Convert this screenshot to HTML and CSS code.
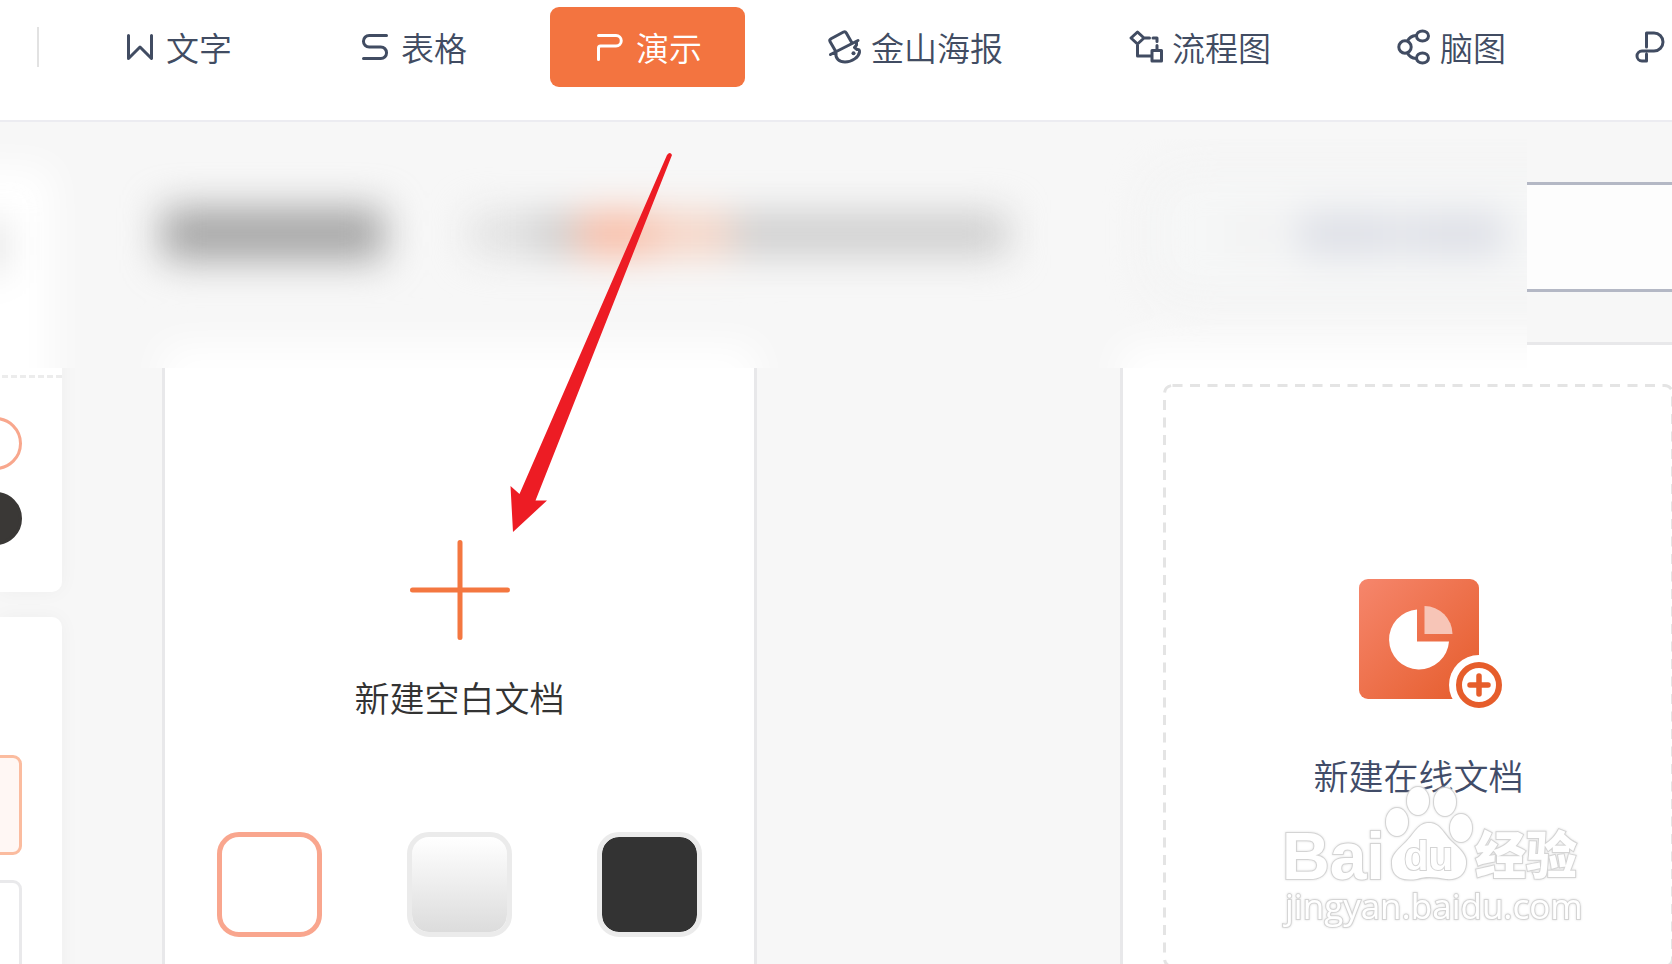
FILE: index.html
```html
<!DOCTYPE html>
<html lang="zh-CN">
<head>
    <meta charset="UTF-8">
    <meta name="viewport" content="width=device-width, initial-scale=1.0">
    <title>新建演示</title>
    <link rel="stylesheet" href="styles.css">
</head>
<body>
    <header class="header">
        <div class="divider"></div>
        <nav class="nav">
            <a class="nav-item" href="#">
                <svg class="icon" viewBox="0 0 34 34"><path d="M5.5 5.5V28.5L17 17L28.5 28.5V5.5"/></svg>
                <span>文字</span>
            </a>
            <a class="nav-item" href="#">
                <svg class="icon" viewBox="0 0 34 34"><path d="M28.5 5.5H11.2A5.7 5.7 0 0 0 11.2 17H22.8A5.7 5.7 0 0 1 22.8 28.5H5.5"/></svg>
                <span>表格</span>
            </a>
            <a class="nav-item active" href="#">
                <svg class="icon" viewBox="0 0 34 34"><path d="M5.5 29.5V18q0-2 2-2H23a5.2 5.2 0 0 0 0-10.5H5.5"/></svg>
                <span>演示</span>
            </a>
            <a class="nav-item" href="#">
                <svg class="icon" viewBox="0 0 34 34">
                    <path d="M7.5 21L2 11.500q-.8-1.800 1-2.800L15.500 2q1.800-.8 2.800 1L24 13M2.500 24.500L30 10.500M8 22.500C7 29 11.500 32 17 32C24 32 31 27 31.500 22Q31.800 19 29 19.500L26.500 17.500L28.500 15V12"/>
                    <circle class="dot" cx="25.500" cy="23.300" r="2"/>
                </svg>
                <span>金山海报</span>
            </a>
            <a class="nav-item" href="#">
                <svg class="icon" viewBox="0 0 34 34">
                    <path d="M8.500 2L15 8L8.500 14L2 8ZM8.500 14V26H22M15 8H20.500M24 8H28V11.500M28 15.500V20M23 20.500H32.500V31H23Z"/>
                </svg>
                <span>流程图</span>
            </a>
            <a class="nav-item" href="#">
                <svg class="icon" viewBox="0 0 34 34">
                    <circle cx="8" cy="17" r="6.200"/>
                    <ellipse cx="25.500" cy="6" rx="6" ry="5"/>
                    <ellipse cx="25.500" cy="28" rx="6" ry="5"/>
                    <path d="M10.500 11Q13 6 19 5.500M10.500 23Q13 28 19 28.500"/>
                </svg>
                <span>脑图</span>
            </a>
            <a class="nav-item" href="#" aria-label="PDF">
                <svg class="icon" viewBox="0 0 34 34">
                    <path d="M14.500 17V3H22A9 9 0 0 1 22 21H10A5 5 0 0 0 10 31H14.500V24"/>
                </svg>
            </a>
        </nav>
    </header>

    <main class="workspace">
        <aside class="sidebar">
            <div class="side-card side-card-top">
                <div class="side-line"></div>
                <button class="round-choice" aria-label="白色"></button>
                <button class="round-choice round-dark" aria-label="黑色"></button>
            </div>
            <div class="side-card side-card-bottom">
                <button class="box-choice selected" aria-label="选项一"></button>
                <button class="box-choice" aria-label="选项二"></button>
            </div>
        </aside>

        <section class="content">
            <div class="toolbar">
                <input class="search" type="text" aria-label="搜索">
            </div>

            <div class="panels">
                <div class="panel blank-panel">
                    <svg class="plus" viewBox="0 0 100 100"><path d="M50 2.500V97.500M2.500 50H97.500"/></svg>
                    <div class="panel-label">新建空白文档</div>
                    <div class="swatches">
                        <input class="swatch white" type="radio" name="color" aria-label="白色" checked>
                        <input class="swatch gray" type="radio" name="color" aria-label="灰色">
                        <input class="swatch dark" type="radio" name="color" aria-label="黑色">
                    </div>
                </div>

                <div class="panel online-panel">
                    <div class="dashed-box">
                        <svg class="dashes"><rect x="1.500" y="1.500" rx="8"/></svg>
                        <svg class="ppt" viewBox="0 0 120 120">
                            <defs>
                                <linearGradient id="pptFill" x1="0" y1="0" x2="1" y2="1">
                                    <stop offset="0" stop-color="#f6866c"/>
                                    <stop offset="1" stop-color="#e55c2b"/>
                                </linearGradient>
                            </defs>
                            <rect width="120" height="120" rx="9" fill="url(#pptFill)"/>
                            <path d="M58 30.500A30 30 0 1 0 90 62.500H58Z" fill="#fff"/>
                            <path d="M65.500 27A28.500 28.500 0 0 1 93.500 55H65.500Z" fill="#f7c5b7"/>
                            <circle cx="120" cy="106" r="30" fill="#fff"/>
                            <circle cx="120" cy="106" r="20" fill="none" stroke="#e65d2b" stroke-width="6"/>
                            <path d="M120 97V115M111 106H129" stroke="#e65d2b" stroke-width="5.500" stroke-linecap="round"/>
                        </svg>
                        <div class="panel-label online-label">新建在线文档</div>
                    </div>
                </div>
            </div>
        </section>

        <!-- blurred strip over the toolbar -->
        <div class="veil">
            <div class="smear">
                <div class="smear-side"><i class="side-mark"></i></div>
                <div class="smear-content">
                    <div class="smear-row">
                        <i class="title-bar"></i>
                        <i class="s1"></i><i class="s2"></i><i class="s3"></i><i class="s4"></i><i class="s5"></i>
                        <div class="smear-search">
                            <i class="search-mark"></i>
                            <i class="search-words"></i>
                        </div>
                    </div>
                    <div class="smear-panels">
                        <i class="smear-panel"></i>
                        <i class="smear-panel"></i>
                    </div>
                </div>
            </div>
        </div>
    </main>

    <svg class="arrow" viewBox="0 0 162 380">
        <path d="M157 3Q160-1 162 3L25.500 348.500H37L3 380L.500 334L9.500 342Z"/>
    </svg>

    <svg class="watermark" viewBox="0 0 310 150">
        <text class="wm-bai" x="2" y="93">Bai</text>
        <g class="paw">
            <ellipse cx="117" cy="36" rx="11" ry="14"/>
            <ellipse cx="138" cy="15" rx="11" ry="14"/>
            <ellipse cx="165" cy="16" rx="11" ry="14"/>
            <ellipse cx="181" cy="42" rx="11" ry="14"/>
            <path d="M149 37C160 37 163 47 171 55C180 63 187 69 186 78C185 90 176 94 166 93C155 91 146 90 137 93C124 95 112 92 112 78C111 69 118 64 126 56C135 47 138 37 149 37Z"/>
        </g>
        <text class="wm-du" x="124" y="84">du</text>
        <text class="wm-cn" x="195" y="88">经验</text>
        <text class="wm-url" x="5" y="133">jingyan.baidu.com</text>
    </svg>
</body>
</html>
```

FILE: styles.css
```css
* {
    box-sizing: border-box;
}

body {
    margin: 0;
    height: 100vh;
    overflow: hidden;
    position: relative;
    display: flex;
    flex-direction: column;
    background-color: #f7f7f7;
    font-family: "Noto Sans CJK SC", sans-serif;
    font-weight: 350;
    color: #333333;
}

/* header */
.header {
    flex: none;
    display: flex;
    align-items: flex-start;
    padding: 7px 0 33px 37px;
    background-color: #ffffff;
    border-bottom: 2px solid #ececf1;
}

.divider {
    flex: none;
    width: 2px;
    height: 40px;
    margin: 20px 41px 0 0;
    background-color: #e2e2e2;
}

.nav {
    display: flex;
    gap: 40px;
}

.nav-item {
    flex: none;
    display: flex;
    align-items: center;
    gap: 9px;
    height: 80px;
    padding: 0 43px;
    border-radius: 9px;
    color: #414c62;
    font-size: 33px;
    line-height: 46px;
    text-decoration: none;
}

.nav-item.active {
    background-color: #f37440;
    color: #ffffff;
}

.icon {
    width: 34px;
    height: 34px;
    overflow: visible;
    fill: none;
    stroke: currentColor;
    stroke-width: 3;
    stroke-linecap: round;
    stroke-linejoin: round;
}

.icon .dot {
    fill: currentColor;
    stroke: none;
}

/* left column */
.workspace {
    flex: 1;
    position: relative;
    display: flex;
    min-height: 0;
    overflow: hidden;
}

.sidebar {
    flex: none;
    width: 62px;
    padding-top: 45px;
}

.side-card {
    display: flex;
    flex-direction: column;
    align-items: flex-end;
    background-color: #ffffff;
    border-radius: 0 10px 10px 0;
    box-shadow: 0 0 20px rgba(0, 0, 0, 0.04);
}

.side-card-top {
    padding: 208px 0 47px;
    margin-bottom: 25px;
}

.side-card-bottom {
    padding-top: 138px;
    height: 500px;
}

.side-line {
    width: 100%;
    height: 3px;
    margin-bottom: 39px;
    background: repeating-linear-gradient(to left, #ececec 0 6px, #ffffff 6px 9px);
}

.round-choice {
    width: 53px;
    height: 53px;
    margin: 0 40px 22px 0;
    padding: 0;
    background-color: #ffffff;
    border: 3px solid #f8a78d;
    border-radius: 50%;
}

.round-dark {
    margin-bottom: 0;
    background-color: #3a3836;
    border-color: #3a3836;
}

.box-choice {
    width: 100px;
    height: 100px;
    margin: 0 40px 25px 0;
    padding: 0;
    background-color: #ffffff;
    border: 3px solid #e9e9eb;
    border-radius: 9px;
}

.box-choice.selected {
    background-color: #fff7f4;
    border-color: #fbbc9f;
}

/* toolbar row */
.content {
    flex: none;
    margin-left: 100px;
}

.toolbar {
    display: flex;
    justify-content: flex-end;
    padding-top: 60px;
    height: 220px;
}

.search {
    width: 567px;
    height: 110px;
    padding: 0 80px;
    background-color: #fdfdfd;
    border: 3px solid #b4b8c5;
    border-right: none;
    outline: none;
}

/* panels */
.panels {
    display: flex;
    gap: 363px;
}

.panel {
    flex: none;
    width: 595px;
    background-color: #ffffff;
    border: 3px solid #e8e8ea;
}

.blank-panel {
    display: flex;
    flex-direction: column;
    align-items: center;
    padding-top: 195px;
}

.plus {
    width: 100px;
    height: 100px;
    margin-bottom: 34px;
    stroke: #f47740;
    stroke-width: 5;
    stroke-linecap: round;
}

.panel-label {
    font-size: 35px;
    line-height: 46px;
    white-space: nowrap;
}

.swatches {
    display: flex;
    gap: 85px;
    margin-top: 112px;
}

.swatch {
    appearance: none;
    width: 105px;
    height: 105px;
    margin: 0;
    border: 5px solid #ebebeb;
    border-radius: 22px;
}

.swatch.white {
    background-color: #ffffff;
    border-color: #f9a68e;
}

.swatch.gray {
    background: linear-gradient(#ffffff, #dcdcdc) padding-box;
}

.swatch.dark {
    background: #333333 padding-box;
}

.online-panel {
    padding: 39px 38px 39px 40px;
}

.dashed-box {
    position: relative;
    display: flex;
    flex-direction: column;
    align-items: center;
    height: 584px;
    padding-top: 195px;
}

.dashes {
    position: absolute;
    top: 0;
    left: 0;
    width: 100%;
    height: 100%;
    fill: none;
    stroke: #e4e4e4;
    stroke-width: 3;
    stroke-dasharray: 10 7.5;
}

.dashes rect {
    width: calc(100% - 3px);
    height: calc(100% - 3px);
}

.ppt {
    width: 120px;
    height: 120px;
    overflow: visible;
}

.online-label {
    margin-top: 53px;
    color: #414c68;
}

/* blurred strip */
.veil {
    position: absolute;
    top: 17px;
    left: 0;
    right: 145px;
    height: 229px;
    overflow: hidden;
    background-color: #f7f7f7;
}

.smear {
    display: flex;
    width: 2000px;
    height: 360px;
    margin-left: -100px;
    filter: blur(19px);
}

.smear i {
    flex: none;
}

.smear-side {
    flex: none;
    width: 152px;
    height: 340px;
    margin: 28px 110px 0 0;
    padding: 55px 0 0 80px;
    background-color: #ffffff;
}

.side-mark {
    display: block;
    width: 22px;
    height: 48px;
    background-color: #d6d6d6;
}

.smear-row {
    display: flex;
    align-items: center;
    height: 206px;
    padding-bottom: 16px;
}

.title-bar {
    width: 222px;
    height: 52px;
    margin-right: 86px;
    background-color: #a4a4a4;
}

.s1,
.s2,
.s3,
.s4,
.s5 {
    height: 42px;
}

.s1 {
    width: 62px;
    background-color: #e0e0e0;
}

.s2 {
    width: 46px;
    background-color: #cccccc;
}

.s3 {
    width: 76px;
    background-color: #f9b8a0;
}

.s4 {
    width: 78px;
    background-color: #f5d2c2;
}

.s5 {
    width: 276px;
    margin-right: 140px;
    background-color: #cccccc;
}

.smear-search {
    flex: none;
    display: flex;
    align-items: center;
    width: 600px;
    height: 130px;
    padding-left: 76px;
    background-color: #f6f7f7;
    border: 12px solid #f1f1f1;
    border-radius: 40px;
}

.search-mark {
    width: 30px;
    height: 30px;
    margin-right: 30px;
    background-color: #ededed;
}

.search-words {
    width: 210px;
    height: 40px;
    background: linear-gradient(to right, #dbdde5 40%, #e4e6eb 50%, #dbdde5 60%);
}

.smear-panels {
    display: flex;
    gap: 363px;
}

.smear-panel {
    width: 595px;
    height: 154px;
    background-color: #ffffff;
}

/* things lying over the page */
.arrow {
    position: absolute;
    top: 152px;
    left: 510px;
    width: 162px;
    height: 380px;
    fill: #ed1c24;
}

.watermark {
    position: absolute;
    right: 82px;
    top: 786px;
    width: 310px;
    height: 150px;
    fill: #ffffff;
    stroke: #d4d4d4;
    stroke-width: 2;
    paint-order: stroke;
    filter: drop-shadow(0 0 1px #dddddd);
}

.wm-bai {
    font: bold 66px "Liberation Sans", Arial, sans-serif;
}

.wm-du {
    font: bold 40px "Liberation Sans", Arial, sans-serif;
}

.wm-cn {
    font: 900 51px "Noto Sans CJK SC", sans-serif;
}

.wm-url {
    font: 35px "Open Sans", sans-serif;
}
```
